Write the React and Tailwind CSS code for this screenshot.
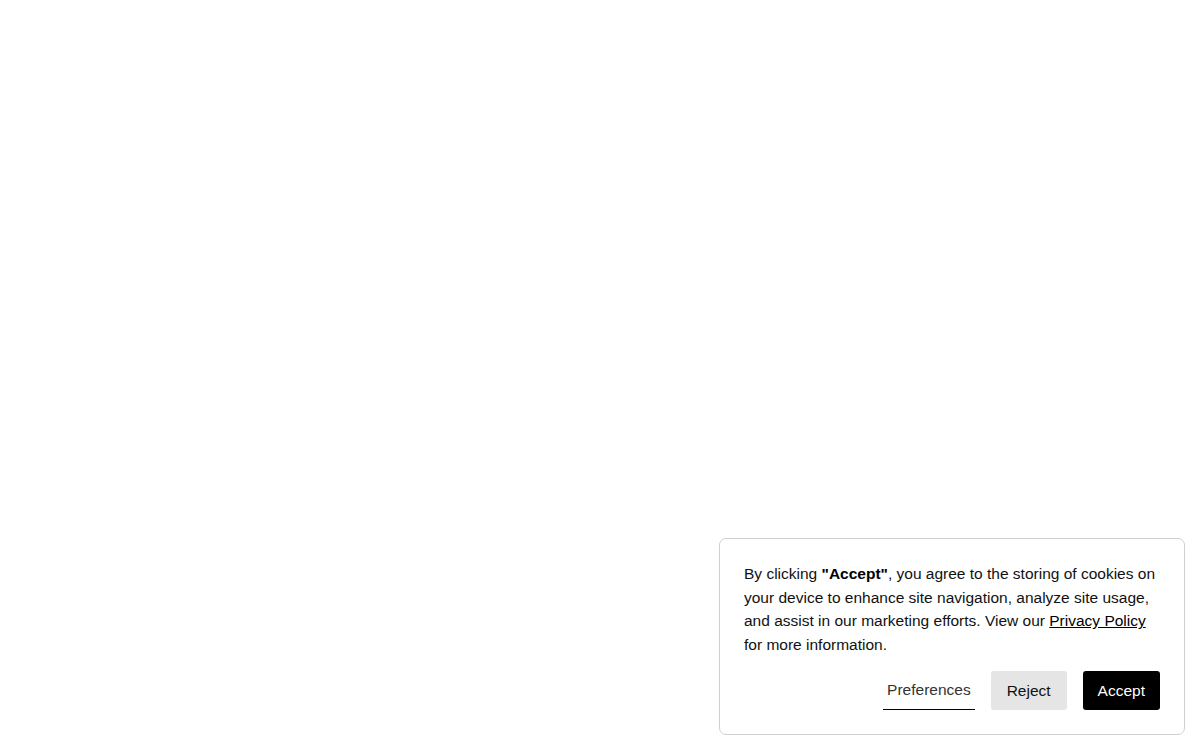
import React from 'react';

export default function App() {
  return (
    <div className="relative w-full h-[750px] bg-white" style={{ fontFamily: '"Liberation Sans", Arial, sans-serif' }}>
      {/* Cookie consent banner */}
      <div className="absolute right-[15px] bottom-[15px] w-[466px] bg-white border border-[#cfcfcf] rounded-[7px] px-6 pt-[23px] pb-6">
        <p className="text-[15.5px] leading-[23.4px] text-[#111]">
          By clicking <strong className="font-bold text-black">"Accept"</strong>, you agree to the storing of cookies on your device to enhance site navigation, analyze site usage, and assist in our marketing efforts. View our{' '}
          <a href="#" className="underline text-black">Privacy Policy</a> for more information.
        </p>
        <div className="flex justify-end items-center gap-4 mt-[15px]">
          <button className="h-[39px] px-1 text-[15.5px] text-[#333] border-b border-black leading-none">
            Preferences
          </button>
          <button className="h-[39px] px-4 text-[15.5px] text-[#111] bg-[#e5e5e5] rounded-[3px] leading-none">
            Reject
          </button>
          <button className="h-[39px] px-[15px] text-[15.5px] text-white bg-black rounded-[3px] leading-none">
            Accept
          </button>
        </div>
      </div>
    </div>
  );
}
